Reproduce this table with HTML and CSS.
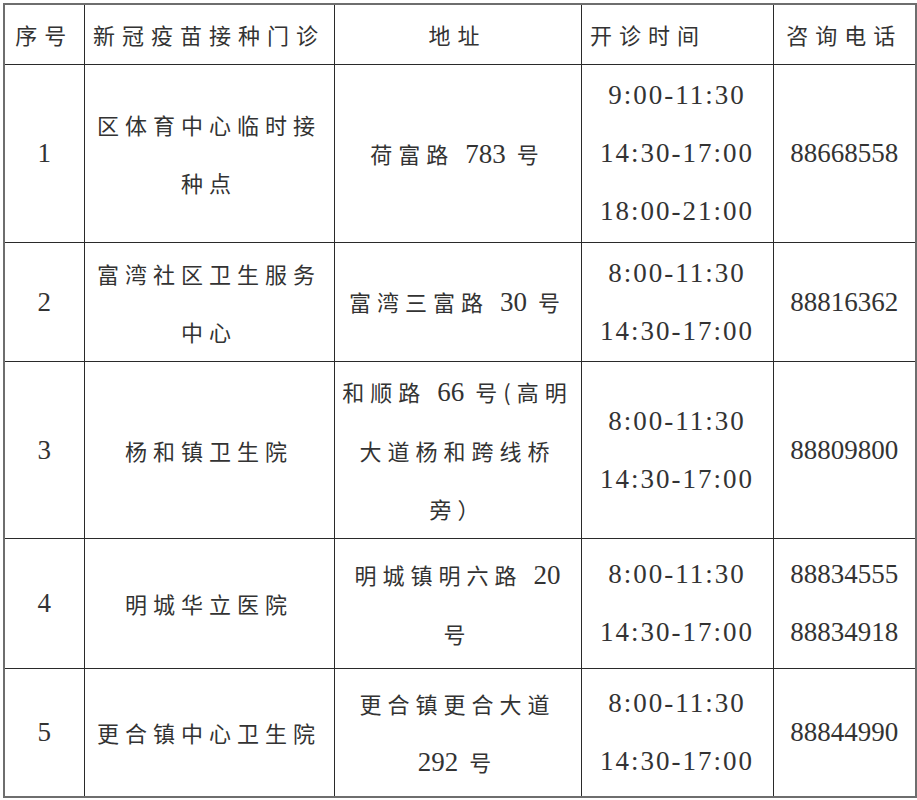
FILE: index.html
```html
<!DOCTYPE html>
<html lang="zh-CN">
<head>
<meta charset="utf-8">
<title>新冠疫苗接种门诊</title>
<link rel="stylesheet" href="styles.css">
</head>
<body>
<table class="clinics">
  <colgroup>
    <col class="c-no"><col class="c-name"><col class="c-addr"><col class="c-time"><col class="c-tel">
  </colgroup>
  <thead>
    <tr class="r-head">
      <th>序号</th>
      <th>新冠疫苗接种门诊</th>
      <th>地址</th>
      <th class="h-time">开诊时间</th>
      <th>咨询电话</th>
    </tr>
  </thead>
  <tbody>
    <tr class="r1">
      <td class="num">1</td>
      <td>区体育中心临时接<br>种点</td>
      <td>荷富路 <span class="num">783</span> 号</td>
      <td class="time">9:00-11:30<br>14:30-17:00<br>18:00-21:00</td>
      <td class="num">88668558</td>
    </tr>
    <tr class="r2">
      <td class="num">2</td>
      <td>富湾社区卫生服务<br>中心</td>
      <td>富湾三富路 <span class="num">30</span> 号</td>
      <td class="time">8:00-11:30<br>14:30-17:00</td>
      <td class="num">88816362</td>
    </tr>
    <tr class="r3">
      <td class="num">3</td>
      <td>杨和镇卫生院</td>
      <td>和顺路 <span class="num">66</span> 号(高明<br>大道杨和跨线桥<br>旁）</td>
      <td class="time">8:00-11:30<br>14:30-17:00</td>
      <td class="num">88809800</td>
    </tr>
    <tr class="r4">
      <td class="num">4</td>
      <td>明城华立医院</td>
      <td>明城镇明六路 <span class="num">20</span><br>号</td>
      <td class="time">8:00-11:30<br>14:30-17:00</td>
      <td class="num">88834555<br>88834918</td>
    </tr>
    <tr class="r5">
      <td class="num">5</td>
      <td>更合镇中心卫生院</td>
      <td>更合镇更合大道<br><span class="num">292</span> 号</td>
      <td class="time">8:00-11:30<br>14:30-17:00</td>
      <td class="num">88844990</td>
    </tr>
  </tbody>
</table>
</body>
</html>
```

FILE: styles.css
```css
html, body {
  margin: 0;
  padding: 0;
  background: #ffffff;
}

body {
  padding: 3px 0 0 3px;
}

.clinics {
  border-collapse: collapse;
  table-layout: fixed;
  width: 912px;
  border: 2px solid #6e6e6e;
  color: #333333;
  font-family: "Noto Sans CJK SC", "Liberation Serif", serif;
  font-size: 22px;
}

.c-no { width: 80px; }
.c-name { width: 250px; }
.c-addr { width: 247px; }
.c-time { width: 192px; }
.c-tel { width: 143px; }

.clinics th,
.clinics td {
  border: 1px solid #2a2a2a;
  padding: 0;
  text-align: center;
  vertical-align: middle;
  line-height: 58px;
  letter-spacing: 6px;
  font-weight: 400;
  white-space: nowrap;
}

.clinics th {
  letter-spacing: 7px;
}

.clinics .h-time {
  padding-right: 58px;
}

.clinics .num {
  font-family: "Liberation Serif", serif;
  font-size: 27px;
  letter-spacing: 0;
  font-weight: 400;
}

.clinics .time {
  font-family: "Liberation Serif", serif;
  font-size: 27px;
  letter-spacing: 2px;
  font-weight: 400;
}

.r-head { height: 60px; }
.r1 { height: 178px; }
.r2 { height: 119px; }
.r3 { height: 177px; }
.r4 { height: 130px; }
.r5 { height: 129px; }
```
